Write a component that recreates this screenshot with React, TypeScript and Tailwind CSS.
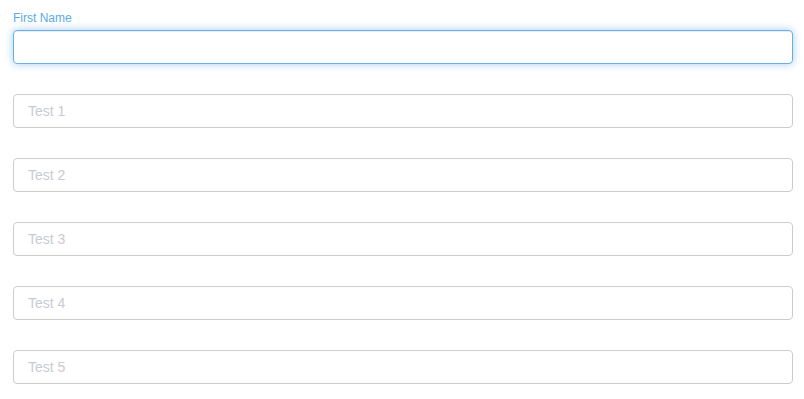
const fields = ["Test 1", "Test 2", "Test 3", "Test 4", "Test 5"]

export default function App() {
  return (
    <div className="min-h-[399px] bg-white px-[13px] pt-[12px] font-['Liberation_Sans',Arial,sans-serif]">
      <div className="mb-[12px]">
        <label className="block h-[18px] text-[12px] leading-[12px] text-[#5aaae8]">First Name</label>
        <input
          className="block h-[34px] w-[780px] rounded-[4px] border border-[#66afe9] px-[14px] text-[14px] outline-none shadow-[inset_0_1px_1px_rgba(0,0,0,0.075),0_0_8px_rgba(102,175,233,0.6)]"
          autoFocus
        />
      </div>
      {fields.map((f) => (
        <div key={f} className="mb-[12px] pt-[18px]">
          <input
            className="block h-[34px] w-[780px] rounded-[4px] border border-[#cccccc] px-[14px] text-[14px] outline-none placeholder:text-[#c9cad2]"
            placeholder={f}
          />
        </div>
      ))}
    </div>
  )
}
